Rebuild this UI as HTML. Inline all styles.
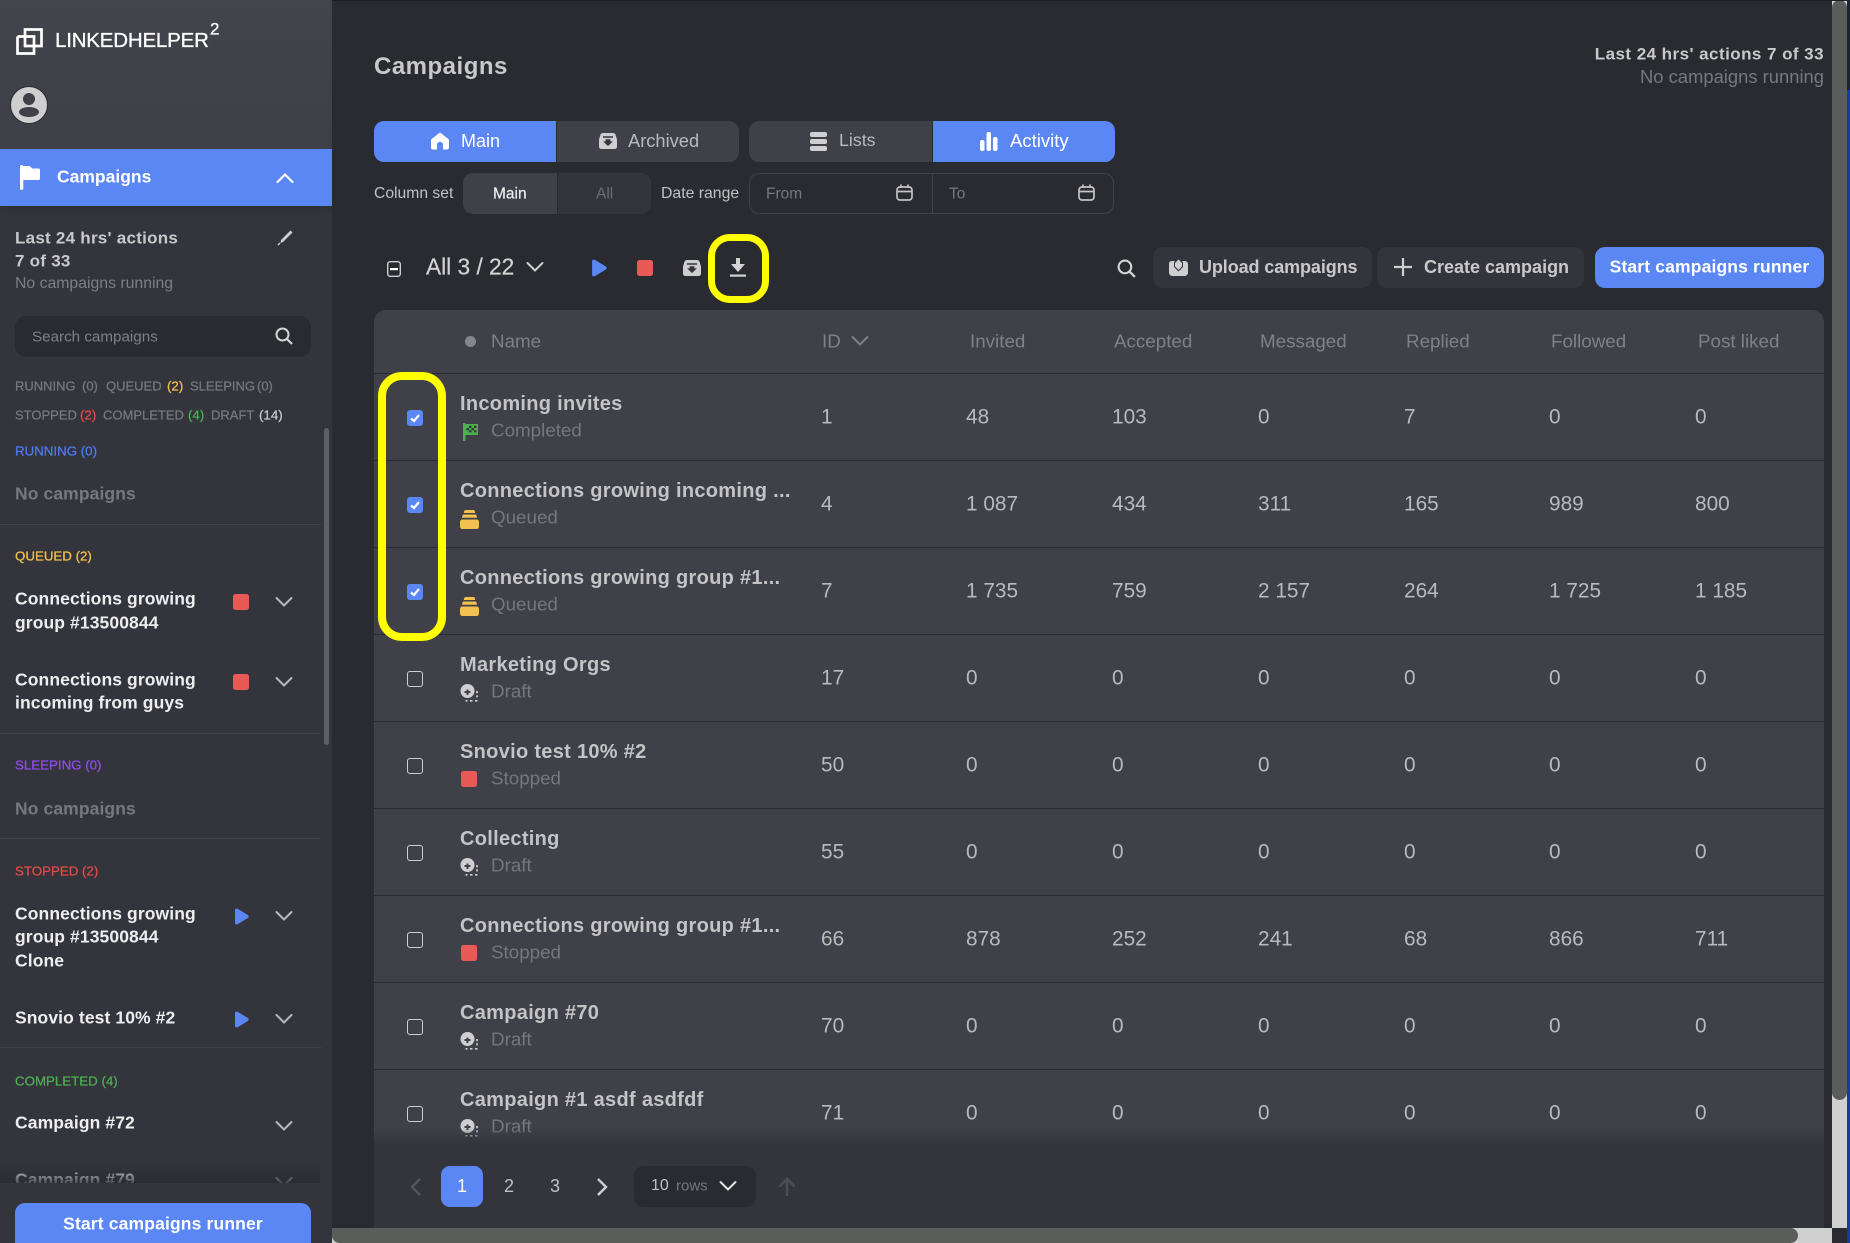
<!DOCTYPE html>
<html lang="en"><head><meta charset="utf-8"><title>Campaigns</title>
<style>
html,body{margin:0;padding:0;width:1850px;height:1243px;overflow:hidden;background:#2a2b30}
body{position:relative;font-family:"Liberation Sans",sans-serif;color:#c9c9cc}
.a{position:absolute}
.t{position:absolute;white-space:nowrap;line-height:1;transform:translateY(-50%)}
.m{font-weight:700}
.s{position:absolute;overflow:visible}
.f{font-size:13px;color:#77787c;-webkit-text-stroke:.25px currentColor}
.h{font-size:13.300px;-webkit-text-stroke:.25px currentColor}
.c{font-size:17.500px;color:#eeeef0;font-weight:700;letter-spacing:.1px}
.nc{font-size:17.500px;color:#77787c;font-weight:700;letter-spacing:.1px}
.dv{position:absolute;left:0;width:321px;height:1px;background:#404149}
.row{position:absolute;left:0;width:1450px;height:86px;border-top:1px solid #2a2b30;background:#3f4048}
.row .n{left:86px;top:30px;font-size:20px;font-weight:700;letter-spacing:.3px;color:#c4c4c7}
.row .st{left:117px;top:57px;font-size:18.800px;color:#76777b}
.row .v{top:44px;font-size:20.800px;color:#b9babd}
.row .ic{left:86px;top:49px}
.row .ic.fg{left:89px}
.row .ic.sp{left:87px}
.cb{position:absolute;left:33px;top:36px;width:14px;height:14px;border:1.500px solid #cfcfd2;border-radius:3px}
.cb.on{width:16px;height:16px;border:0;background:#5b87f5}
.th{position:absolute;top:342px;font-size:18.800px;color:#808186;line-height:1;transform:translateY(-50%);white-space:nowrap}
</style></head>
<body>
<svg width="0" height="0" style="position:absolute">
<defs>
<symbol id="chev" viewBox="0 0 18 12"><path d="M1.500 2 L9 9.500 L16.500 2" fill="none" stroke="currentColor" stroke-width="2" stroke-linecap="round"/></symbol>
<symbol id="play" viewBox="0 0 15 17"><path d="M1 2.200C1 .6 2.400 0 3.600 .8L13.800 7c1.200.8 1.200 2.300 0 3L3.600 16.200C2.400 17 1 16.400 1 14.800Z" fill="#5b87f5"/></symbol>
<symbol id="box" viewBox="0 0 18 16"><path d="M4 0H14C15.500 0 16 .6 16.600 2L18 6.500V13.500C18 15 17 16 15.500 16H2.500C1 16 0 15 0 13.500V6.500L1.400 2C2 .6 2.500 0 4 0Z" fill="#cfcfd1"/><path d="M4 3.200H14V4.700H4ZM6.600 6.200H11.400V8.400H14L9 13L4 8.400H6.600Z" fill="#34353c"/></symbol>
<symbol id="cal" viewBox="0 0 17 17"><rect x="1" y="3" width="15" height="13" rx="3" fill="none" stroke="#c4c4c7" stroke-width="1.700"/><path d="M1.500 7.500H15.500M5 .5V4M12 .5V4" stroke="#c4c4c7" stroke-width="1.700" fill="none"/></symbol>
<symbol id="q" viewBox="0 0 19 19"><path d="M5.500 0H13.500C14.500 0 15 1 15.200 3H3.800C4 1 4.500 0 5.500 0Z" fill="#f2c14f"/><path d="M3.500 4.500H15.500C16.300 4.500 16.800 5.800 17 7.800H2C2.200 5.800 2.700 4.500 3.500 4.500Z" fill="#f2c14f"/><path d="M2.500 9.500H16.500C18 9.500 19 10.500 19 12V16C19 18 18 19 16.500 19H2.500C1 19 0 18 0 16V12C0 10.500 1 9.500 2.500 9.500Z" fill="#f2c14f"/></symbol>
<symbol id="dr" viewBox="0 0 19 18"><circle cx="7.500" cy="7" r="7" fill="#cfcfd1"/><path d="M6.500 5.500H8.500V7H10.500V9H8.500V11H6.500V9H4.500V7H6.500Z" fill="#3f4048"/><path d="M17 7V9.200M17 11.200V13.400M17.500 16.800H15M12.500 16.800H10M7.500 16.800H5.500M8 12V14" stroke="#cfcfd1" stroke-width="1.700" fill="none"/></symbol>
<symbol id="fl" viewBox="0 0 15 18"><path d="M0 0H2.500V18H0Z" fill="#4caf50"/><path d="M2 1H15V12H2Z" fill="#4caf50"/><path d="M6 2.800H8.500V5H6ZM11 2.800H13.500V5H11ZM3.500 5H6V7.200H3.500ZM8.500 5H11V7.200H8.500ZM6 7.200H8.500V9.400H6ZM11 7.200H13.500V9.400H11Z" fill="#34383a"/></symbol>
<symbol id="stp" viewBox="0 0 16 16"><rect width="16" height="16" rx="2.500" fill="#e75a55"/></symbol>
</defs></svg>

<!-- main scrollbars/desktop -->
<div class="a" style="left:1847px;top:0;width:3px;height:1243px;background:#0f3f9c"></div>
<div class="a" style="left:1847px;top:0;width:3px;height:90px;background:#1c2433"></div>
<div class="a" style="left:1832px;top:0;width:15px;height:1228px;background:#d0d0d0"></div>
<div class="a" style="left:1832px;top:0;width:15px;height:1100px;background:#5b5d5b;border-radius:8px 8px 8px 8px"></div>
<div class="a" style="left:332px;top:1228px;width:1500px;height:15px;background:#d0d0d0"></div>
<div class="a" style="left:332px;top:1228px;width:1466px;height:15px;background:#5b5d5b;border-radius:0 8px 8px 8px"></div>
<div class="a" style="left:1832px;top:1228px;width:15px;height:15px;background:#2a2b30"></div>
<div class="a" style="left:0;top:0;width:1847px;height:1px;background:#1e1f22"></div>

<!-- sidebar -->
<div class="a" style="left:0;top:0;width:332px;height:1243px;background:#34353c;overflow:hidden">
<div class="a" style="left:0;top:0;width:332px;height:149px;background:linear-gradient(#43444c,#3e3f47)"></div>
<svg class="s" style="left:16px;top:28px" width="27" height="27" viewBox="0 0 27 27"><path d="M9 8.500V1.500H25.500V18H18" fill="none" stroke="#fff" stroke-width="2.700"/><path d="M9 8.500H18V18H9ZM1.500 8.500H9M1.500 8.500V25.500H18V18" fill="none" stroke="#fff" stroke-width="2.700"/></svg>
<div class="t" style="left:55px;top:41px;font-size:20.500px;color:#fff;letter-spacing:-.2px;-webkit-text-stroke:.3px #fff">LINKEDHELPER</div>
<div class="t" style="left:210px;top:29px;font-size:17px;color:#fff;-webkit-text-stroke:.3px #fff">2</div>
<svg class="s" style="left:10px;top:86px" width="38" height="38" viewBox="0 0 38 38"><circle cx="19" cy="19" r="18.500" fill="#cfcfcf" stroke="#2a2b30" stroke-width="1"/><circle cx="19" cy="13" r="6" fill="#3f4048"/><ellipse cx="19" cy="26" rx="10" ry="5" fill="#3f4048"/></svg>
<div class="a" style="left:0;top:149px;width:332px;height:57px;background:#5b87f5;box-shadow:0 4px 8px rgba(0,0,0,.12)"></div>
<svg class="s" style="left:20px;top:165px" width="20" height="25" viewBox="0 0 20 25"><path d="M0 1.500C0 .5 .8 0 1.700 0C2.600 0 3.300 .5 3.300 1.500V24C3.300 25 .0 25 0 24Z" fill="#fff"/><path d="M3 1H9C10 1 11 2 12 3.500H18.500C19.500 3.500 20 4.200 20 5V13.500C20 14.500 19.500 15 18.500 15H3Z" fill="#fff"/></svg>
<div class="t m" style="left:57px;top:177px;font-size:17.500px;color:#fff">Campaigns</div>
<svg class="s" style="left:276px;top:172px;color:#fff" width="18" height="12" viewBox="0 0 18 12"><path d="M1.500 10L9 2.500L16.500 10" fill="none" stroke="#fff" stroke-width="2.200" stroke-linecap="round"/></svg>

<div class="t m" style="left:15px;top:238px;font-size:17px;letter-spacing:.25px;color:#c9c9cc">Last 24 hrs' actions</div>
<div class="t m" style="left:15px;top:261px;font-size:17px;letter-spacing:.25px;color:#c9c9cc">7 of 33</div>
<div class="t" style="left:15px;top:284px;font-size:15.800px;color:#7d7e82">No campaigns running</div>
<svg class="s" style="left:278px;top:230px" width="15" height="15" viewBox="0 0 15 15"><path d="M12.500 .5L14.500 2.500L5 12L2.500 13L3 10Z" fill="#cfcfd1"/><path d="M0 15L2 13" stroke="#cfcfd1" stroke-width="1.500"/></svg>
<div class="a" style="left:15px;top:316px;width:296px;height:41px;background:#2a2b30;border-radius:11px"></div>
<div class="t" style="left:32px;top:337px;font-size:15.200px;color:#808186">Search campaigns</div>
<svg class="s" style="left:275px;top:327px" width="18" height="18" viewBox="0 0 18 18"><circle cx="7.500" cy="7.500" r="6" fill="none" stroke="#d4d4d6" stroke-width="2"/><path d="M12 12L17 17" stroke="#d4d4d6" stroke-width="2.200"/></svg>

<div class="t f" style="left:15px;top:386px">RUNNING</div><div class="t f" style="left:82px;top:386px">(0)</div>
<div class="t f" style="left:106px;top:386px">QUEUED</div><div class="t h" style="left:167px;top:386px;color:#f2c14f">(2)</div>
<div class="t f" style="left:190px;top:386px">SLEEPING</div><div class="t f" style="left:257px;top:386px">(0)</div>
<div class="t f" style="left:15px;top:415px">STOPPED</div><div class="t h" style="left:80px;top:415px;color:#e04b46">(2)</div>
<div class="t f" style="left:103px;top:415px">COMPLETED</div><div class="t h" style="left:188px;top:415px;color:#4caf50">(4)</div>
<div class="t f" style="left:211px;top:415px">DRAFT</div><div class="t h" style="left:259px;top:415px;color:#c9c9cc">(14)</div>

<div class="a" style="left:324px;top:428px;width:5px;height:317px;background:#5e5f64;border-radius:3px"></div>

<div class="t h" style="left:15px;top:451px;color:#4d7cf0">RUNNING (0)</div>
<div class="t nc" style="left:15px;top:494px">No campaigns</div>
<div class="dv" style="top:524px"></div>

<div class="t h" style="left:15px;top:556px;color:#f2c14f">QUEUED (2)</div>
<div class="t c" style="left:15px;top:599px">Connections growing</div>
<div class="t c" style="left:15px;top:623px">group #13500844</div>
<svg class="s" style="left:233px;top:594px" width="16" height="16"><use href="#stp"/></svg>
<svg class="s" style="left:275px;top:596px;color:#b9babd" width="18" height="12"><use href="#chev"/></svg>
<div class="t c" style="left:15px;top:680px">Connections growing</div>
<div class="t c" style="left:15px;top:703px">incoming from guys</div>
<svg class="s" style="left:233px;top:674px" width="16" height="16"><use href="#stp"/></svg>
<svg class="s" style="left:275px;top:676px;color:#b9babd" width="18" height="12"><use href="#chev"/></svg>
<div class="dv" style="top:733px"></div>

<div class="t h" style="left:15px;top:765px;color:#8e4de8">SLEEPING (0)</div>
<div class="t nc" style="left:15px;top:809px">No campaigns</div>
<div class="dv" style="top:838px"></div>

<div class="t h" style="left:15px;top:871px;color:#e04b46">STOPPED (2)</div>
<div class="t c" style="left:15px;top:914px">Connections growing</div>
<div class="t c" style="left:15px;top:937px">group #13500844</div>
<div class="t c" style="left:15px;top:961px">Clone</div>
<svg class="s" style="left:234px;top:908px" width="15" height="17"><use href="#play"/></svg>
<svg class="s" style="left:275px;top:910px;color:#b9babd" width="18" height="12"><use href="#chev"/></svg>
<div class="t c" style="left:15px;top:1018px">Snovio test 10% #2</div>
<svg class="s" style="left:234px;top:1011px" width="15" height="17"><use href="#play"/></svg>
<svg class="s" style="left:275px;top:1013px;color:#b9babd" width="18" height="12"><use href="#chev"/></svg>
<div class="dv" style="top:1047px"></div>

<div class="t h" style="left:15px;top:1081px;color:#4caf50">COMPLETED (4)</div>
<div class="t c" style="left:15px;top:1123px">Campaign #72</div>
<svg class="s" style="left:275px;top:1120px;color:#b9babd" width="18" height="12"><use href="#chev"/></svg>
<div class="t c" style="left:15px;top:1180px">Campaign #79</div>
<svg class="s" style="left:275px;top:1176px;color:#b9babd" width="18" height="12"><use href="#chev"/></svg>
<div class="a" style="left:0;top:1163px;width:320px;height:20px;background:linear-gradient(rgba(42,43,48,0),rgba(42,43,48,.8))"></div>
<div class="a" style="left:0;top:1183px;width:332px;height:60px;background:#34353c"></div>
<div class="a" style="left:15px;top:1203px;width:296px;height:50px;background:#5b87f5;border-radius:10px"></div>
<div class="t m" style="left:15px;top:1224px;width:296px;text-align:center;font-size:17.500px;letter-spacing:.15px;color:#fff">Start campaigns runner</div>
</div>

<!-- header -->
<div class="t m" style="left:374px;top:67px;font-size:24px;letter-spacing:.5px;color:#c9c9cc">Campaigns</div>
<div class="t m" style="right:26px;top:54px;font-size:17px;letter-spacing:.45px;color:#c9c9cc">Last 24 hrs' actions 7 of 33</div>
<div class="t" style="right:26px;top:77px;font-size:18.400px;color:#77787c">No campaigns running</div>

<!-- tabs -->
<div class="a" style="left:374px;top:121px;width:182px;height:41px;background:#5b87f5;border-radius:10px 0 0 10px"></div>
<div class="a" style="left:557px;top:121px;width:182px;height:41px;background:#3f4048;border-radius:0 10px 10px 0"></div>
<div class="a" style="left:749px;top:121px;width:183px;height:41px;background:#3f4048;border-radius:10px 0 0 10px"></div>
<div class="a" style="left:933px;top:121px;width:182px;height:41px;background:#5b87f5;border-radius:0 10px 10px 0"></div>
<svg class="s" style="left:431px;top:132px" width="18" height="18" viewBox="0 0 18 18"><path d="M9 .5L18 7.500V15.500C18 17 17 17.500 15.500 17.500H12V12.500C12 11 11 10 9 10C7 10 6 11 6 12.500V17.500H2.500C1 17.500 0 17 0 15.500V7.500Z" fill="#fff"/></svg>
<div class="t" style="left:461px;top:141px;font-size:18px;color:#fff">Main</div>
<svg class="s" style="left:599px;top:133px" width="18" height="16"><use href="#box"/></svg>
<div class="t" style="left:628px;top:141px;font-size:18.300px;color:#b9babd">Archived</div>
<svg class="s" style="left:810px;top:132px" width="17" height="19" viewBox="0 0 17 19"><rect width="17" height="5" rx="2" fill="#cfcfd1"/><rect y="7" width="17" height="5" rx="2" fill="#cfcfd1"/><rect y="14" width="17" height="5" rx="2" fill="#cfcfd1"/></svg>
<div class="t" style="left:839px;top:141px;font-size:17.800px;color:#b9babd">Lists</div>
<svg class="s" style="left:980px;top:132px" width="18" height="19" viewBox="0 0 18 19"><rect y="8" width="4.500" height="11" rx="2" fill="#fff"/><rect x="6.500" width="4.500" height="19" rx="2" fill="#fff"/><rect x="13" y="5" width="4.500" height="14" rx="2" fill="#fff"/></svg>
<div class="t" style="left:1010px;top:141px;font-size:18.500px;color:#fff">Activity</div>

<div class="t" style="left:374px;top:194px;font-size:15.700px;color:#c0c1c4">Column set</div>
<div class="a" style="left:463px;top:173px;width:94px;height:41px;background:#3f4048;border-radius:10px 0 0 10px"></div>
<div class="a" style="left:558px;top:173px;width:93px;height:41px;background:#34353c;border-radius:0 10px 10px 0"></div>
<div class="t" style="left:493px;top:194px;font-size:15.500px;color:#eeeef0;-webkit-text-stroke:.2px currentColor">Main</div>
<div class="t" style="left:596px;top:194px;font-size:15.500px;color:#6c6d72">All</div>
<div class="t" style="left:661px;top:194px;font-size:15.800px;color:#c0c1c4">Date range</div>
<div class="a" style="left:749px;top:173px;width:363px;height:39px;border:1px solid #404149;border-radius:10px"></div>
<div class="a" style="left:932px;top:173px;width:1px;height:41px;background:#404149"></div>
<div class="t" style="left:766px;top:194px;font-size:15.500px;color:#77787c">From</div>
<div class="t" style="left:949px;top:194px;font-size:15.500px;color:#77787c">To</div>
<svg class="s" style="left:896px;top:184px" width="17" height="17"><use href="#cal"/></svg>
<svg class="s" style="left:1078px;top:184px" width="17" height="17"><use href="#cal"/></svg>

<!-- toolbar -->
<svg class="s" style="left:387px;top:261px" width="14" height="16" viewBox="0 0 14 16"><rect x=".7" y=".7" width="12.600" height="14.600" rx="2.500" fill="none" stroke="#cfcfd1" stroke-width="1.400"/><rect x="3" y="7" width="8" height="2.200" fill="#fff"/></svg>
<div class="t" style="left:426px;top:267px;font-size:22.700px;color:#d4d4d6;-webkit-text-stroke:.2px currentColor">All 3 / 22</div>
<svg class="s" style="left:526px;top:261px;color:#cfcfd1" width="18" height="12"><use href="#chev"/></svg>
<svg class="s" style="left:591px;top:259px" width="16" height="18"><use href="#play"/></svg>
<svg class="s" style="left:637px;top:260px" width="16" height="16"><use href="#stp"/></svg>
<svg class="s" style="left:683px;top:260px" width="18" height="16"><use href="#box"/></svg>
<svg class="s" style="left:730px;top:258px" width="16" height="19" viewBox="0 0 16 19"><path d="M6 0H10V6H15L8 14L1 6H6Z" fill="#d4d4d6"/><rect y="16.500" width="16" height="2.200" fill="#d4d4d6"/></svg>
<div class="a" style="left:708px;top:234px;width:47px;height:55px;border:7px solid #ffff00;border-radius:22px"></div>

<svg class="s" style="left:1117px;top:259px" width="19" height="19" viewBox="0 0 18 18"><circle cx="7.500" cy="7.500" r="6" fill="none" stroke="#d4d4d6" stroke-width="2"/><path d="M12 12L17 17" stroke="#d4d4d6" stroke-width="2.200"/></svg>
<div class="a" style="left:1153px;top:247px;width:219px;height:41px;background:#34353c;border-radius:10px"></div>
<svg class="s" style="left:1169px;top:258px" width="19" height="18" viewBox="0 0 19 18"><path d="M3 3H15.500C17.500 3 19 4.500 19 6.500V14.500C19 16.500 17.500 18 15.500 18H3.500C1.500 18 0 16.500 0 14.500V6C0 4 1 3 3 3Z" fill="#cfcfd1"/><path d="M9.500 0L14 4V9L9.500 13.500L5 9V4Z" fill="#34353c"/><path d="M9.500 1.500L13 5V8.500L9.500 12L6 8.500V5Z" fill="#cfcfd1"/></svg>
<div class="t m" style="left:1199px;top:267px;font-size:18px;letter-spacing:-.1px;color:#c9c9cc">Upload campaigns</div>
<div class="a" style="left:1377px;top:247px;width:207px;height:41px;background:#34353c;border-radius:10px"></div>
<svg class="s" style="left:1394px;top:258px" width="18" height="18" viewBox="0 0 18 18"><path d="M9 0V18M0 9H18" stroke="#cfcfd1" stroke-width="2.200"/></svg>
<div class="t m" style="left:1424px;top:267px;font-size:18px;color:#c9c9cc">Create campaign</div>
<div class="a" style="left:1595px;top:247px;width:229px;height:41px;background:#5b87f5;border-radius:10px"></div>
<div class="t m" style="left:1595px;top:267px;width:229px;text-align:center;font-size:17.500px;letter-spacing:.15px;color:#fff">Start campaigns runner</div>

<!-- table -->
<div class="a" style="left:374px;top:310px;width:1450px;height:64px;background:#3f4048;border-radius:12px 12px 0 0"></div>
<div class="a" style="left:465px;top:336px;width:11px;height:11px;border-radius:6px;background:#85868a"></div>
<div class="th" style="left:491px">Name</div>
<div class="th" style="left:822px">ID</div>
<svg class="s" style="left:851px;top:335px;color:#808186" width="18" height="12"><use href="#chev"/></svg>
<div class="th" style="left:970px">Invited</div>
<div class="th" style="left:1114px">Accepted</div>
<div class="th" style="left:1260px">Messaged</div>
<div class="th" style="left:1406px">Replied</div>
<div class="th" style="left:1551px">Followed</div>
<div class="th" style="left:1698px">Post liked</div>

<div class="a" style="left:374px;top:373px;width:1450px;height:770px;overflow:hidden">
<div class="row" style="top:0"><div class="cb on"><svg width="16" height="16" viewBox="0 0 16 16"><path d="M4 8.500L7 11L12 5" fill="none" stroke="#fff" stroke-width="2.200"/></svg></div><div class="t n">Incoming invites</div><svg class="s ic fg" width="15" height="18"><use href="#fl"/></svg><div class="t st">Completed</div><div class="t v" style="left:447px">1</div><div class="t v" style="left:592px">48</div><div class="t v" style="left:738px">103</div><div class="t v" style="left:884px">0</div><div class="t v" style="left:1030px">7</div><div class="t v" style="left:1175px">0</div><div class="t v" style="left:1321px">0</div></div>
<div class="row" style="top:87px"><div class="cb on"><svg width="16" height="16" viewBox="0 0 16 16"><path d="M4 8.500L7 11L12 5" fill="none" stroke="#fff" stroke-width="2.200"/></svg></div><div class="t n">Connections growing incoming ...</div><svg class="s ic" width="19" height="19"><use href="#q"/></svg><div class="t st">Queued</div><div class="t v" style="left:447px">4</div><div class="t v" style="left:592px">1 087</div><div class="t v" style="left:738px">434</div><div class="t v" style="left:884px">311</div><div class="t v" style="left:1030px">165</div><div class="t v" style="left:1175px">989</div><div class="t v" style="left:1321px">800</div></div>
<div class="row" style="top:174px"><div class="cb on"><svg width="16" height="16" viewBox="0 0 16 16"><path d="M4 8.500L7 11L12 5" fill="none" stroke="#fff" stroke-width="2.200"/></svg></div><div class="t n">Connections growing group #1...</div><svg class="s ic" width="19" height="19"><use href="#q"/></svg><div class="t st">Queued</div><div class="t v" style="left:447px">7</div><div class="t v" style="left:592px">1 735</div><div class="t v" style="left:738px">759</div><div class="t v" style="left:884px">2 157</div><div class="t v" style="left:1030px">264</div><div class="t v" style="left:1175px">1 725</div><div class="t v" style="left:1321px">1 185</div></div>
<div class="row" style="top:261px"><div class="cb"></div><div class="t n">Marketing Orgs</div><svg class="s ic" width="19" height="18"><use href="#dr"/></svg><div class="t st">Draft</div><div class="t v" style="left:447px">17</div><div class="t v" style="left:592px">0</div><div class="t v" style="left:738px">0</div><div class="t v" style="left:884px">0</div><div class="t v" style="left:1030px">0</div><div class="t v" style="left:1175px">0</div><div class="t v" style="left:1321px">0</div></div>
<div class="row" style="top:348px"><div class="cb"></div><div class="t n">Snovio test 10% #2</div><svg class="s ic sp" width="16" height="16"><use href="#stp"/></svg><div class="t st">Stopped</div><div class="t v" style="left:447px">50</div><div class="t v" style="left:592px">0</div><div class="t v" style="left:738px">0</div><div class="t v" style="left:884px">0</div><div class="t v" style="left:1030px">0</div><div class="t v" style="left:1175px">0</div><div class="t v" style="left:1321px">0</div></div>
<div class="row" style="top:435px"><div class="cb"></div><div class="t n">Collecting</div><svg class="s ic" width="19" height="18"><use href="#dr"/></svg><div class="t st">Draft</div><div class="t v" style="left:447px">55</div><div class="t v" style="left:592px">0</div><div class="t v" style="left:738px">0</div><div class="t v" style="left:884px">0</div><div class="t v" style="left:1030px">0</div><div class="t v" style="left:1175px">0</div><div class="t v" style="left:1321px">0</div></div>
<div class="row" style="top:522px"><div class="cb"></div><div class="t n">Connections growing group #1...</div><svg class="s ic sp" width="16" height="16"><use href="#stp"/></svg><div class="t st">Stopped</div><div class="t v" style="left:447px">66</div><div class="t v" style="left:592px">878</div><div class="t v" style="left:738px">252</div><div class="t v" style="left:884px">241</div><div class="t v" style="left:1030px">68</div><div class="t v" style="left:1175px">866</div><div class="t v" style="left:1321px">711</div></div>
<div class="row" style="top:609px"><div class="cb"></div><div class="t n">Campaign #70</div><svg class="s ic" width="19" height="18"><use href="#dr"/></svg><div class="t st">Draft</div><div class="t v" style="left:447px">70</div><div class="t v" style="left:592px">0</div><div class="t v" style="left:738px">0</div><div class="t v" style="left:884px">0</div><div class="t v" style="left:1030px">0</div><div class="t v" style="left:1175px">0</div><div class="t v" style="left:1321px">0</div></div>
<div class="row" style="top:696px"><div class="cb"></div><div class="t n">Campaign #1 asdf asdfdf</div><svg class="s ic" width="19" height="18"><use href="#dr"/></svg><div class="t st">Draft</div><div class="t v" style="left:447px">71</div><div class="t v" style="left:592px">0</div><div class="t v" style="left:738px">0</div><div class="t v" style="left:884px">0</div><div class="t v" style="left:1030px">0</div><div class="t v" style="left:1175px">0</div><div class="t v" style="left:1321px">0</div></div>
<div class="a" style="left:0;top:755px;width:1450px;height:15px;background:linear-gradient(rgba(52,53,60,0),rgba(52,53,60,.9))"></div>
</div>

<div class="a" style="left:378px;top:372px;width:52px;height:253px;border:8px solid #ffff00;border-radius:24px"></div>

<!-- footer -->
<div class="a" style="left:374px;top:1143px;width:1450px;height:85px;background:#34353c"></div>
<svg class="s" style="left:410px;top:1177px" width="12" height="20" viewBox="0 0 12 20"><path d="M10 2L2 10L10 18" fill="none" stroke="#55565c" stroke-width="2.400"/></svg>
<div class="a" style="left:441px;top:1166px;width:42px;height:41px;background:#5b87f5;border-radius:9px"></div>
<div class="t" style="left:441px;top:1186px;width:42px;text-align:center;font-size:18px;color:#fff">1</div>
<div class="t" style="left:499px;top:1186px;width:20px;text-align:center;font-size:18px;color:#c0c1c4">2</div>
<div class="t" style="left:545px;top:1186px;width:20px;text-align:center;font-size:18px;color:#c0c1c4">3</div>
<svg class="s" style="left:596px;top:1177px" width="12" height="20" viewBox="0 0 12 20"><path d="M2 2L10 10L2 18" fill="none" stroke="#cfcfd1" stroke-width="2.400"/></svg>
<div class="a" style="left:634px;top:1166px;width:122px;height:41px;background:#2a2b30;border-radius:10px"></div>
<div class="t" style="left:651px;top:1186px;font-size:16px;color:#c0c1c4">10</div>
<div class="t" style="left:676px;top:1186px;font-size:15px;color:#77787c">rows</div>
<svg class="s" style="left:719px;top:1180px;color:#e2e2e4" width="18" height="12"><use href="#chev"/></svg>
<svg class="s" style="left:778px;top:1177px" width="18" height="20" viewBox="0 0 18 20"><path d="M9 19V2M1.500 9.500L9 2L16.500 9.500" fill="none" stroke="#4d4e55" stroke-width="2.400"/></svg>
</body></html>
